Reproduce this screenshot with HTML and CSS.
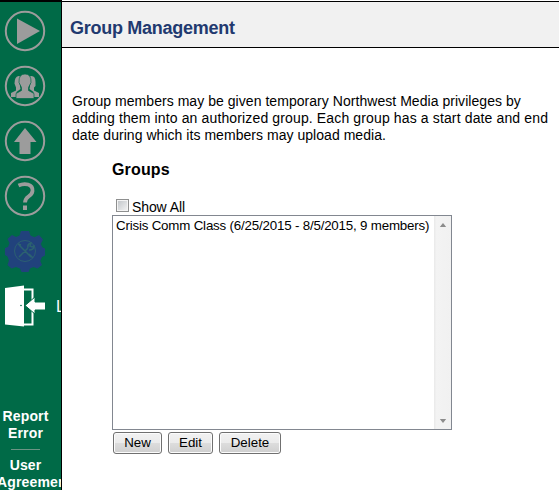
FILE: index.html
```
<!DOCTYPE html>
<html lang="en">
<head>
<meta charset="utf-8">
<title>Group Management</title>
<link rel="stylesheet" href="styles.css">
</head>
<body>
<div class="app">
  <nav class="sidebar">
    <svg class="icon" viewBox="0 0 42 42"><circle class="ring" cx="21" cy="21" r="19.2"/><path class="solid" d="M13 8.500v25.500L36 21z"/></svg>
    <svg class="icon" viewBox="0 0 42 42"><circle class="ring" cx="21" cy="21" r="19.200"/><path class="solid" d="M7 32v-4l5-2.500v-3l-1.500-4q0-7 4-7.500 3 0 4 3l-3 4 1 6-4 3v5zM35 32v-4l-5-2.500v-3l1.500-1.500v-4q0-6-4-6-3 0-4 3l3 4-1 6 4 3v5z"/><path class="solid edge" d="M12 33.500v-5l5.500-3v-3l-2.500-5q-.500-8.500 6-8.500t6 8.500l-2.500 5v3l5.500 3v5z"/></svg>
    <svg class="icon" viewBox="0 0 42 42"><circle class="ring" cx="21" cy="21" r="19.200"/><path class="solid" d="M21 8 10 22h5.500v12h11V22h6z"/></svg>
    <svg class="icon" viewBox="0 0 42 42"><circle class="ring" cx="21" cy="21" r="19.200"/><path class="mark" d="M14.500 10.500q5-2.300 9.500-1 5 1.500 4.500 6.500-.300 3-4 5.500-3.500 2.500-3.500 6"/><path class="solid" d="M19 30.500h4V35h-4z"/></svg>
    <svg class="icon" viewBox="0 0 42 42"><path class="gear" d="m17 1h8l1.500 4.500 4 1.800L35 5l4 4.500-2.200 4.500 1.700 3.500 2.500 1v7l-3 1.500-1.700 4L38 35l-4.500 3.500-4-1.500-3.500 1.500L24.500 42h-7L16 38.500 12 37l-4.500 1.500L3.500 35 5 30.500 3.500 26.500 1 25v-7l3-1L5.500 13 3.500 9 8 5l4 2 3.500-1.500z"/><circle class="gear-ring" cx="21" cy="21" r="10.500"/><path class="tools" d="m15 15 12 12M15 27l9-9m0 0q-1-4 3-5l-1 3 2 1 2-1q0 4-5 4M14 14l3 1M25 24l4 4"/></svg>
    <div class="logout">
      <svg class="door" viewBox="0 0 42 42"><path class="frame" d="M19 4.500h8.500v35H19"/><path class="white" d="M0 3 19 .500v41L0 39.500z"/><path class="arrow" d="M20 20.500 30 12v5h10.500v8H30V29z"/><circle class="knob" cx="16" cy="20.500" r=".8"/></svg>
      <span>Logout</span>
    </div>
    <div class="links">
      <a class="link">Report<br>Error</a>
      <div class="rule"></div>
      <a class="link">User<br><span class="long">Agreement</span></a>
    </div>
  </nav>
  <main class="main">
    <header class="header"><h1>Group Management</h1></header>
    <p class="intro"><span class="line-a">Group members may be given temporary Northwest Media privileges by</span><br><span class="line-b">adding them into an authorized group. Each group has a start date and end</span><br><span class="line-c">date during which its members may upload media.</span></p>
    <section class="groups">
      <h2>Groups</h2>
      <div class="show"><span class="check"></span><span>Show All</span></div>
      <div class="list">
        <div class="option">Crisis Comm Class (6/25/2015 - 8/5/2015, 9 members)</div>
        <div class="scroll">
          <svg viewBox="0 0 8 5"><path d="M0 5 4 0l4 5z"/></svg>
          <svg viewBox="0 0 8 5"><path d="M0 0h8L4 5z"/></svg>
        </div>
      </div>
      <div class="buttons"><button class="new">New</button><button class="edit">Edit</button><button class="delete">Delete</button></div>
    </section>
  </main>
</div>
</body>
</html>
```
FILE: styles.css
```
* { box-sizing: border-box; }
body { margin: 0; background: #fff; color: #000; font: 14px/17px "Liberation Sans", Arial, sans-serif; overflow: hidden; }
svg { display: block; }
.app { display: flex; width: 559px; height: 490px; }
.sidebar { display: flex; flex-direction: column; flex: none; width: 62px; height: 490px; padding-top: 8px; overflow: hidden; color: #fff; background: #006a47; border-top: 2px solid #000; border-right: 1px solid #000; }
.icon { flex: none; width: 42px; height: 42px; margin: 0 0 13px 4px; }
.ring { fill: none; stroke: #9c9c9c; stroke-width: 2; }
.solid { fill: #9c9c9c; }
.edge { stroke: #006a47; stroke-width: .7; }
.mark { fill: none; stroke: #9c9c9c; stroke-width: 3.800; }
.gear { fill: #21427c; }
.gear-ring { fill: none; stroke: #2c6270; stroke-width: .9; }
.tools { fill: none; stroke: #2c6270; stroke-width: 1.500; }
.logout { display: flex; flex: none; align-items: center; height: 42px; margin-left: 5px; font-size: 16px; white-space: nowrap; }
.door { flex: none; width: 42px; height: 42px; margin-right: 9px; }
.frame { fill: none; stroke: #fff; stroke-width: 2; }
.white { fill: #fff; }
.arrow { fill: #fff; stroke: #006a47; stroke-width: 1; }
.knob { fill: #006a47; }
.links { margin-top: 81px; font-weight: bold; text-align: center; letter-spacing: .15px; }
.link { display: block; width: 51px; white-space: nowrap; }
.long { display: block; margin-left: -3px; text-align: left; }
.link:last-child br { display: none; }
.rule { width: 29px; height: 1px; margin: 7px 0 7px 11px; background: #6c9484; }
.main { flex: 1; min-width: 0; }
.header { height: 48px; padding: 16px 0 0 8px; background: linear-gradient(#fff 1px, #000 1px, #000 2px, #f1f1f1 2px); border-bottom: 1px solid #000; }
h1 { margin: 0; color: #21396f; font-size: 18px; line-height: 24px; letter-spacing: -.27px; }
.intro { margin: 45px 0 0 10px; white-space: nowrap; }
.line-a { letter-spacing: .045px; }
.line-b { letter-spacing: .135px; }
.line-c { letter-spacing: .04px; }
.groups { width: 340px; margin: 16px 0 0 50px; }
h2 { margin: 0; font-size: 16px; line-height: 20px; letter-spacing: .15px; }
.show { display: flex; height: 16px; margin: 19px 0 0 4px; gap: 3px; letter-spacing: -.1px; }
.check { width: 13px; height: 13px; border: 1px solid #8e8f8f; background: linear-gradient(135deg, #bfc3c7, #f5f5f5); box-shadow: inset 0 0 0 1px #f4f4f4; }
.list { display: flex; justify-content: space-between; width: 340px; height: 215px; border: 1px solid #828790; }
.option { padding: 1px 0 0 3px; font-size: 13.333px; letter-spacing: -.19px; white-space: nowrap; }
.scroll { display: flex; flex-direction: column; flex: none; align-items: center; justify-content: space-between; width: 17px; padding: 7px 0 6px; background: linear-gradient(90deg, #e9e9e9, #f3f3f3 15%, #f1f1f1); }
.scroll svg { width: 8px; height: 4px; fill: #8c8c8c; }
.buttons { display: flex; gap: 6px; padding: 2px 0 0 1px; }
button { height: 22px; padding: 0; border: 1px solid #707070; border-radius: 3px; box-shadow: inset 0 0 0 1px #fcfcfc; background: linear-gradient(#f2f2f2, #ebebeb 49%, #dddddd 50%, #cfcfcf); color: #000; font: 13.333px/18px "Liberation Sans", Arial, sans-serif; }
.new { width: 49px; }
.edit { width: 45px; }
.delete { width: 62px; }
```
